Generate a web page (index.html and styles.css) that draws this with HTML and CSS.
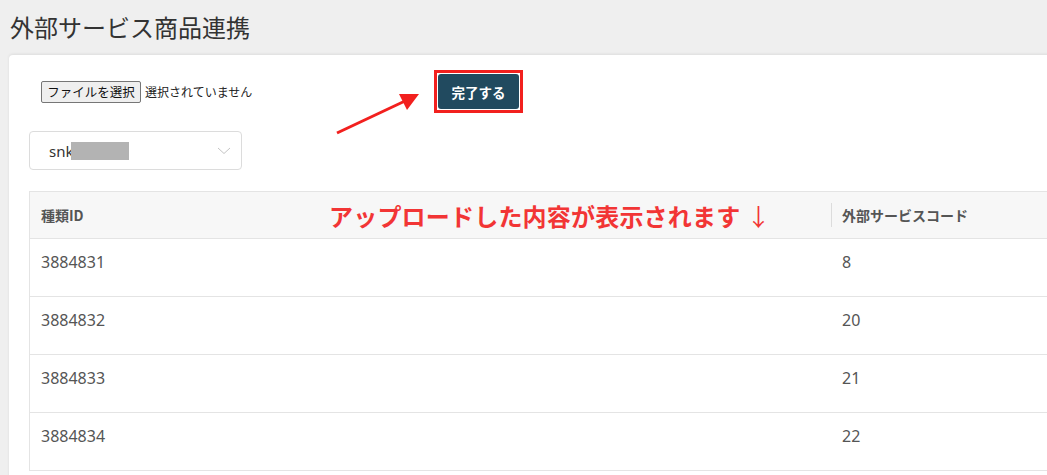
FILE: index.html
```html
<!DOCTYPE html>
<html lang="ja">
<head>
<meta charset="utf-8">
<link rel="stylesheet" href="styles.css">
</head>
<body>
<h1 class="page-title">外部サービス商品連携</h1>
<div class="card">
  <div class="top-row">
    <div class="file-group">
      <span class="file-btn">ファイルを選択</span>
      <span class="file-status">選択されていません</span>
    </div>
    <div class="highlight">
      <button class="done-btn">完了する</button>
    </div>
  </div>
  <div class="select">
    <span class="select-text">snk</span><span class="mask"></span>
    <svg class="chevron" width="14" height="8" viewBox="0 0 14 8"><path d="M1 1 L7 6.5 L13 1" fill="none" stroke="#c4c4c4" stroke-width="1"/></svg>
  </div>
  <div class="table">
    <div class="thead">
      <div class="cell col1">種類ID</div>
      <div class="cell col2"><span class="sep"></span>外部サービスコード</div>
    </div>
    <div class="row"><div class="cell col1">3884831</div><div class="cell col2">8</div></div>
    <div class="row"><div class="cell col1">3884832</div><div class="cell col2">20</div></div>
    <div class="row"><div class="cell col1">3884833</div><div class="cell col2">21</div></div>
    <div class="row"><div class="cell col1">3884834</div><div class="cell col2">22</div></div>
  </div>
  <div class="note">アップロードした内容が表示されます<span class="down">↓</span></div>
  <svg class="arrow" width="100" height="60" viewBox="0 0 100 60">
    <line x1="4" y1="50" x2="72" y2="18" stroke="#f2201e" stroke-width="3"/>
    <polygon points="86,11 66,11 74,27" fill="#f2201e"/>
  </svg>
</div>
</body>
</html>
```
FILE: styles.css
```css
html, body {
  margin: 0;
  padding: 0;
}
body {
  background: #efefef;
  font-family: "Noto Sans", "Noto Sans CJK JP", sans-serif;
  color: #555;
  overflow: hidden;
  height: 475px;
}
.page-title {
  margin: 0;
  padding: 10px 0 0 10px;
  height: 43px;
  box-sizing: border-box;
  font-family: "Noto Sans CJK JP", sans-serif;
  font-weight: 400;
  font-size: 24px;
  line-height: 34px;
  color: #333;
}
.card {
  position: relative;
  margin-left: 9px;
  margin-right: -80px;
  margin-top: 12px;
  background: #fff;
  border-radius: 4px;
  box-shadow: 0 -1px 3px rgba(0,0,0,0.08);
  padding: 15px 20px 0 20px;
  height: 500px;
}
.top-row {
  display: flex;
  align-items: center;
  padding-left: 12px;
}
.file-group {
  width: 393px;
  display: flex;
  align-items: center;
  gap: 4px;
}
.file-btn {
  display: inline-block;
  box-sizing: border-box;
  height: 22px;
  width: 100px;
  border: 1px solid #767676;
  border-radius: 2px;
  background: #efefef;
  font-family: "Noto Sans CJK JP", sans-serif;
  font-size: 12.5px;
  line-height: 20px;
  text-align: center;
  color: #111;
}
.file-status {
  font-family: "Noto Sans CJK JP", sans-serif;
  font-size: 12px;
  color: #222;
}
.highlight {
  border: 3px solid #f2201e;
  padding: 1px;
  display: flex;
}
.done-btn {
  width: 81px;
  height: 35px;
  background: #214a5f;
  border: none;
  border-radius: 3px;
  color: #fff;
  font-family: "Noto Sans CJK JP", sans-serif;
  font-weight: 700;
  font-size: 13.5px;
  padding: 0;
}
.select {
  margin-top: 18px;
  width: 213px;
  height: 39px;
  box-sizing: border-box;
  border: 1px solid #dcdcdc;
  border-radius: 4px;
  display: flex;
  align-items: center;
  padding-left: 19px;
  position: relative;
}
.select-text {
  font-family: "Noto Sans", sans-serif;
  font-size: 15px;
  color: #333;
}
.mask {
  display: block;
  flex-shrink: 0;
  width: 58px;
  height: 18px;
  background: #b3b3b3;
  margin-left: -2px;
}
.chevron {
  margin-left: auto;
  margin-right: 10px;
}
.table {
  margin-top: 21px;
  border-left: 1px solid #e4e4e4;
  border-top: 1px solid #e4e4e4;
}
.thead, .row {
  display: flex;
  border-bottom: 1px solid #e4e4e4;
}
.thead {
  height: 46px;
  background: #f7f7f7;
  align-items: center;
}
.row {
  height: 57px;
}
.cell {
  box-sizing: border-box;
}
.col1 {
  width: 801px;
  padding-left: 11px;
}
.col2 {
  flex: 1;
  padding-left: 11px;
  position: relative;
}
.thead .cell {
  font-family: "Noto Sans CJK JP", sans-serif;
  font-weight: 700;
  font-size: 14px;
  color: #555;
}
.sep {
  position: absolute;
  left: 0;
  top: 50%;
  transform: translateY(-50%);
  width: 1px;
  height: 24px;
  background: #dcdcdc;
}
.row .cell {
  font-family: "Noto Sans", sans-serif;
  font-size: 16px;
  line-height: 20px;
  padding-top: 13px;
  color: #555;
}
.note {
  position: absolute;
  left: 320px;
  top: 145px;
  font-family: "Noto Sans CJK JP", sans-serif;
  font-weight: 700;
  font-size: 24px;
  letter-spacing: 0.2px;
  line-height: 32px;
  color: #f23535;
  white-space: nowrap;
}
.down {
  font-weight: 400;
  margin-left: 6px;
}
.arrow {
  position: absolute;
  left: 324px;
  top: 28px;
}
```
